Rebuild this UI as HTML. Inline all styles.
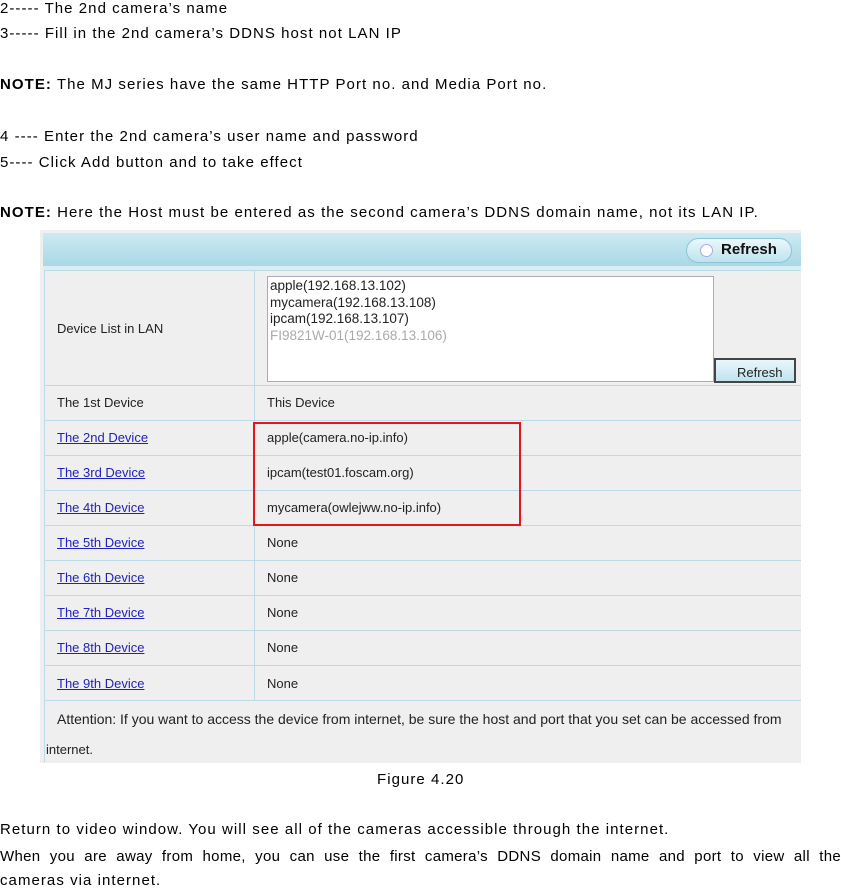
<!DOCTYPE html>
<html><head><meta charset="utf-8"><style>
*{margin:0;padding:0;box-sizing:border-box}
body{width:841px;height:888px;background:#fff;position:relative;overflow:hidden;font-family:"Liberation Sans",sans-serif;color:#000}
.t{position:absolute;left:0;font-size:15px;white-space:nowrap;line-height:18px;letter-spacing:1.05px}
.s{position:absolute;font-size:13px;color:#222;white-space:nowrap;line-height:16px}
.l{color:#2222bb;text-decoration:underline}
.hl{position:absolute;background:#bcdbe6;height:1px}
</style></head><body>
<div class="t" style="top:0px">2----- The 2nd camera’s name</div>
<div class="t" style="top:25px">3----- Fill in the 2nd camera’s DDNS host not LAN IP</div>
<div class="t" style="top:76px"><b>NOTE:</b> The MJ series have the same HTTP Port no. and Media Port no.</div>
<div class="t" style="top:128px">4 ---- Enter the 2nd camera’s user name and password</div>
<div class="t" style="top:154px">5---- Click Add button and to take effect</div>
<div class="t" style="top:204px"><b>NOTE:</b> Here the Host must be entered as the second camera’s DDNS domain name, not its LAN IP.</div>

<div style="position:absolute;left:40px;top:230px;width:761px;height:533px;background:#efefef"></div>
<div style="position:absolute;left:43px;top:233px;width:758px;height:33px;background:linear-gradient(#cdeaf2,#a9d8e6)"></div>
<div style="position:absolute;left:43px;top:266px;width:758px;height:4px;background:#d7eef5"></div>
<div style="position:absolute;left:686px;top:238px;width:106px;height:25px;border-radius:13px;background:linear-gradient(#eaf7fb,#bfe3ee);border:1px solid #8cc4d6"></div>
<div style="position:absolute;left:700px;top:244px;width:13px;height:13px;border-radius:50%;background:#fff;border:1px solid #aad"></div>
<div class="s" style="left:721px;top:242px;font-weight:bold;font-size:15px;color:#111">Refresh</div>
<div style="position:absolute;left:44px;top:270px;width:1px;height:492px;background:#bcdbe6"></div>
<div style="position:absolute;left:254px;top:270px;width:1px;height:431px;background:#bcdbe6"></div>
<div class="hl" style="left:44px;top:270px;width:757px"></div>
<div class="hl" style="left:44px;top:385px;width:757px"></div>
<div class="hl" style="left:44px;top:420px;width:757px"></div>
<div class="hl" style="left:44px;top:455px;width:757px"></div>
<div class="hl" style="left:44px;top:490px;width:757px"></div>
<div class="hl" style="left:44px;top:525px;width:757px"></div>
<div class="hl" style="left:44px;top:560px;width:757px"></div>
<div class="hl" style="left:44px;top:595px;width:757px"></div>
<div class="hl" style="left:44px;top:630px;width:757px"></div>
<div class="hl" style="left:44px;top:665px;width:757px"></div>
<div class="hl" style="left:44px;top:700px;width:757px"></div>
<div style="position:absolute;left:267px;top:276px;width:447px;height:106px;background:#fff;border:1px solid #aab"></div>
<div class="s" style="left:270px;top:278px;line-height:16.5px;font-size:13.5px">apple(192.168.13.102)<br>mycamera(192.168.13.108)<br>ipcam(192.168.13.107)<br><span style="color:#aaa">FI9821W-01(192.168.13.106)</span></div>
<div style="position:absolute;left:714px;top:358px;width:82px;height:25px;background:linear-gradient(#eaf7fb,#bfe3ee);border:2px solid #444"></div>
<div class="s" style="left:737px;top:365px">Refresh</div>
<div class="s" style="left:57px;top:321px">Device List in LAN</div>
<div class="s" style="left:57px;top:395px">The 1st Device</div><div class="s" style="left:267px;top:395px">This Device</div>
<div class="s l" style="left:57px;top:430px">The 2nd Device</div><div class="s" style="left:267px;top:430px">apple(camera.no-ip.info)</div>
<div class="s l" style="left:57px;top:465px">The 3rd Device</div><div class="s" style="left:267px;top:465px">ipcam(test01.foscam.org)</div>
<div class="s l" style="left:57px;top:500px">The 4th Device</div><div class="s" style="left:267px;top:500px">mycamera(owlejww.no-ip.info)</div>
<div class="s l" style="left:57px;top:535px">The 5th Device</div><div class="s" style="left:267px;top:535px">None</div>
<div class="s l" style="left:57px;top:570px">The 6th Device</div><div class="s" style="left:267px;top:570px">None</div>
<div class="s l" style="left:57px;top:605px">The 7th Device</div><div class="s" style="left:267px;top:605px">None</div>
<div class="s l" style="left:57px;top:640px">The 8th Device</div><div class="s" style="left:267px;top:640px">None</div>
<div class="s l" style="left:57px;top:676px">The 9th Device</div><div class="s" style="left:267px;top:676px">None</div>
<div class="s" style="left:57px;top:711px;font-size:14px">Attention: If you want to access the device from internet, be sure the host and port that you set can be accessed from</div>
<div class="s" style="left:46px;top:742px">internet.</div>
<div style="position:absolute;left:253px;top:422px;width:268px;height:104px;border:2px solid #e8141c"></div>

<div class="t" style="left:377px;top:771px">Figure 4.20</div>
<div class="t" style="top:821px">Return to video window. You will see all of the cameras accessible through the internet.</div>
<div class="t" style="top:848px;width:841px;white-space:normal;text-align:justify;text-align-last:justify;letter-spacing:0.3px">When you are away from home, you can use the first camera’s DDNS domain name and port to view all the</div>
<div class="t" style="top:872px">cameras via internet.</div>
</body></html>
